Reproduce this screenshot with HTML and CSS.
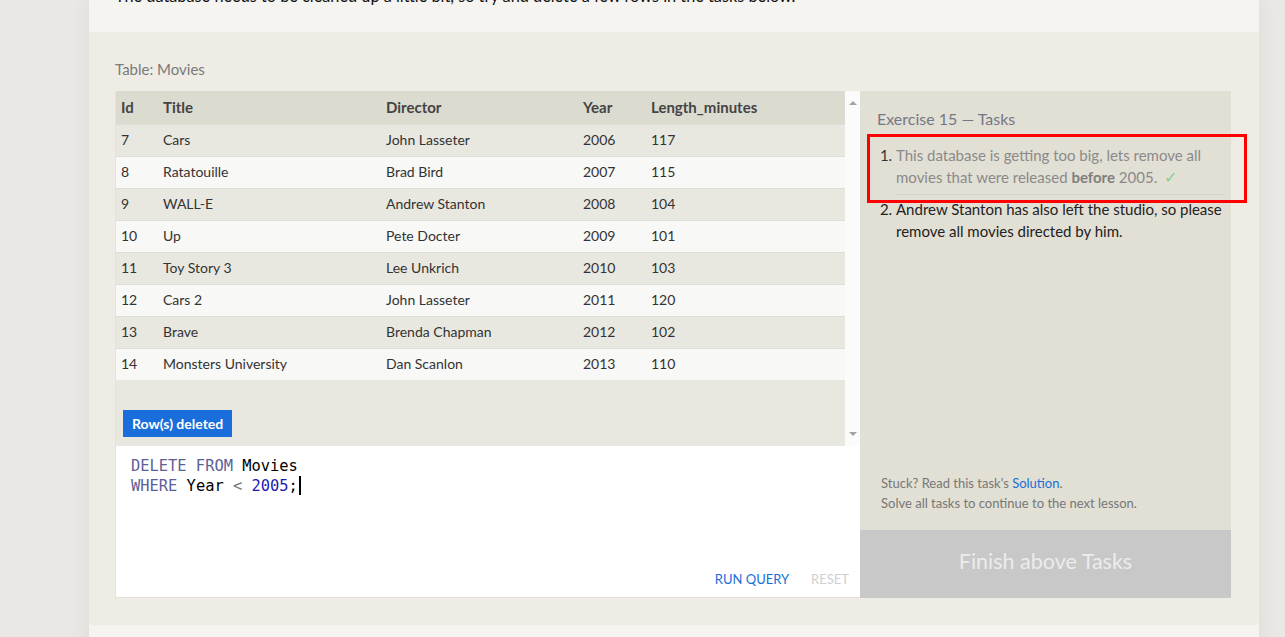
FILE: index.html
```html
<!DOCTYPE html>
<html>
<head>
<meta charset="utf-8">
<link rel="stylesheet" href="styles.css">
</head>
<body>
<div class="page">
  <div class="card">
    <div class="intro"><p>The database needs to be cleaned up a little bit, so try and delete a few rows in the tasks below.</p></div>
    <section class="exercise">
      <div class="table-label">Table: Movies</div>
      <div class="workspace">
        <div class="left">
          <div class="viewport">
            <div class="results">
              <table class="movies">
                <thead>
                  <tr><th class="c-id">Id</th><th class="c-title">Title</th><th class="c-dir">Director</th><th class="c-year">Year</th><th>Length_minutes</th></tr>
                </thead>
                <tbody>
                  <tr><td>7</td><td>Cars</td><td>John Lasseter</td><td>2006</td><td>117</td></tr>
                  <tr><td>8</td><td>Ratatouille</td><td>Brad Bird</td><td>2007</td><td>115</td></tr>
                  <tr><td>9</td><td>WALL-E</td><td>Andrew Stanton</td><td>2008</td><td>104</td></tr>
                  <tr><td>10</td><td>Up</td><td>Pete Docter</td><td>2009</td><td>101</td></tr>
                  <tr><td>11</td><td>Toy Story 3</td><td>Lee Unkrich</td><td>2010</td><td>103</td></tr>
                  <tr><td>12</td><td>Cars 2</td><td>John Lasseter</td><td>2011</td><td>120</td></tr>
                  <tr><td>13</td><td>Brave</td><td>Brenda Chapman</td><td>2012</td><td>102</td></tr>
                  <tr><td>14</td><td>Monsters University</td><td>Dan Scanlon</td><td>2013</td><td>110</td></tr>
                </tbody>
              </table>
              <div class="status"><span class="badge">Row(s) deleted</span></div>
            </div>
            <div class="scrollbar"><span class="arrow up"></span><span class="arrow down"></span></div>
          </div>
          <div class="editor">
            <div class="code">
              <div><span class="kw">DELETE FROM</span> Movies</div>
              <div><span class="kw">WHERE</span> Year <span class="op">&lt;</span> <span class="num">2005</span>;<span class="cursor"></span></div>
            </div>
            <div class="actions"><span class="run">RUN QUERY</span><span class="reset">RESET</span></div>
          </div>
        </div>
        <div class="tasks">
          <div class="tasks-top">
            <h3>Exercise 15 — Tasks</h3>
            <ol>
              <li class="done">This database is getting too big, lets remove all movies that were released <b>before</b> 2005. <span class="check">✓</span></li>
              <li>Andrew Stanton has also left the studio, so please remove all movies directed by him.</li>
            </ol>
          </div>
          <div class="hint">
            <div>Stuck? Read this task's <a>Solution</a>.</div>
            <div>Solve all tasks to continue to the next lesson.</div>
          </div>
          <div class="finish">Finish above Tasks</div>
        </div>
      </div>
    </section>
  </div>
</div>
<div class="highlight"></div>
</body>
</html>
```
FILE: styles.css
```css
html, body {
  margin: 0;
  padding: 0;
}
body {
  background: #ebe7e4;
  font-family: Lato, "Open Sans", sans-serif;
  height: 637px;
  overflow: hidden;
  position: relative;
}
.page {
  display: flex;
  padding-left: 89px;
}
.card {
  width: 1170px;
  background: #f5f4f0;
  box-shadow: 0 0 22px rgba(0, 0, 0, 0.06);
  min-height: 700px;
}
.intro {
  height: 32px;
  overflow: hidden;
  padding-left: 26px;
}
.intro p {
  margin: -16px 0 0;
  font-size: 16.3px;
  line-height: 24px;
  color: #111;
}
.exercise {
  background: #efece5;
  padding: 28px 28px 27px 26px;
  border-radius: 0 0 4px 4px;
}
.table-label {
  font-size: 15px;
  line-height: 18px;
  color: #7a7a7a;
  margin-bottom: 13px;
}
.workspace {
  display: flex;
}
.left {
  width: 744px;
  border-left: 1px solid #e4e2da;
  display: flex;
  flex-direction: column;
}
.viewport {
  height: 355px;
  display: flex;
  background: #e9e8e0;
}
.results {
  flex: 1;
}
.movies {
  width: 100%;
  border-collapse: collapse;
  font-size: 14px;
  color: #333;
}
.movies th {
  background: #dcdbd0;
  height: 31px;
  padding: 0 0 2px 5px;
  text-align: left;
  font-weight: bold;
  color: #444;
  font-size: 15px;
}
.movies td {
  height: 29px;
  padding: 0 0 2px 5px;
  border-top: 1px solid #dfded6;
}
.movies tbody tr:nth-child(odd) td {
  background: #e9e8e0;
}
.movies tbody tr:nth-child(even) td {
  background: #f8f8f6;
}
.c-id { width: 37px; }
.c-title { width: 218px; }
.c-dir { width: 192px; }
.c-year { width: 63px; }
.status {
  padding: 30px 0 0 7px;
}
.badge {
  display: inline-block;
  background: #1a6edb;
  color: #fff;
  font-size: 14px;
  font-weight: bold;
  line-height: 27px;
  padding: 0 9px;
}
.scrollbar {
  width: 15px;
  background: #fbfbfb;
  display: flex;
  flex-direction: column;
  justify-content: space-between;
  align-items: center;
  padding: 10px 0 10px;
}
.arrow {
  width: 0;
  height: 0;
  border-left: 4px solid transparent;
  border-right: 4px solid transparent;
}
.arrow.up { border-bottom: 4px solid #a3a3a3; }
.arrow.down { border-top: 4px solid #a3a3a3; }
.editor {
  height: 151px;
  background: #fff;
  border-bottom: 1px solid #e2e0d7;
  display: flex;
  flex-direction: column;
  justify-content: space-between;
}
.code {
  padding: 10px 0 0 15px;
  font-family: "DejaVu Sans Mono", monospace;
  font-size: 15.4px;
  line-height: 20px;
  color: #000;
}
.kw { color: #5c5f96; }
.op { color: #777; }
.num { color: #1c1cb0; }
.cursor {
  display: inline-block;
  width: 2px;
  height: 19px;
  background: #000;
  vertical-align: -4px;
  margin-left: 1px;
}
.actions {
  display: flex;
  justify-content: flex-end;
  gap: 22px;
  padding: 0 11px 10px 0;
  font-size: 13px;
}
.run { color: #1a6ed8; }
.reset { color: #cfcfcf; }
.tasks {
  flex: 1;
  background: #e2dfd4;
  display: flex;
  flex-direction: column;
}
.tasks-top {
  flex: 1;
  padding: 18px 7px 0 17px;
}
.tasks h3 {
  margin: 0 0 15px;
  font-weight: normal;
  font-size: 16px;
  line-height: 20px;
  color: #757787;
}
.tasks ol {
  margin: 0;
  padding-left: 19px;
  font-size: 15px;
  line-height: 22px;
  color: #222;
}
.tasks li.done {
  color: #8a8a8a;
  padding-bottom: 6px;
  border-bottom: 1px solid #d6d3c8;
  margin-bottom: 3px;
}
.tasks li.done::marker { color: #333; }
.tasks li.done b { color: #7e7e7e; }
.check {
  color: #86cf92;
  font-size: 16px;
  margin-left: 3px;
}
.hint {
  padding: 0 0 17px 21px;
  font-size: 13px;
  line-height: 20px;
  color: #777;
}
.hint a { color: #1a6ed8; }
.finish {
  height: 62px;
  padding-bottom: 6px;
  background: #c8c8c8;
  color: #ececec;
  font-size: 21.5px;
  display: flex;
  align-items: center;
  justify-content: center;
}
.highlight {
  position: absolute;
  left: 867px;
  top: 134px;
  width: 374px;
  height: 63px;
  border: 3px solid #f00;
}
```
